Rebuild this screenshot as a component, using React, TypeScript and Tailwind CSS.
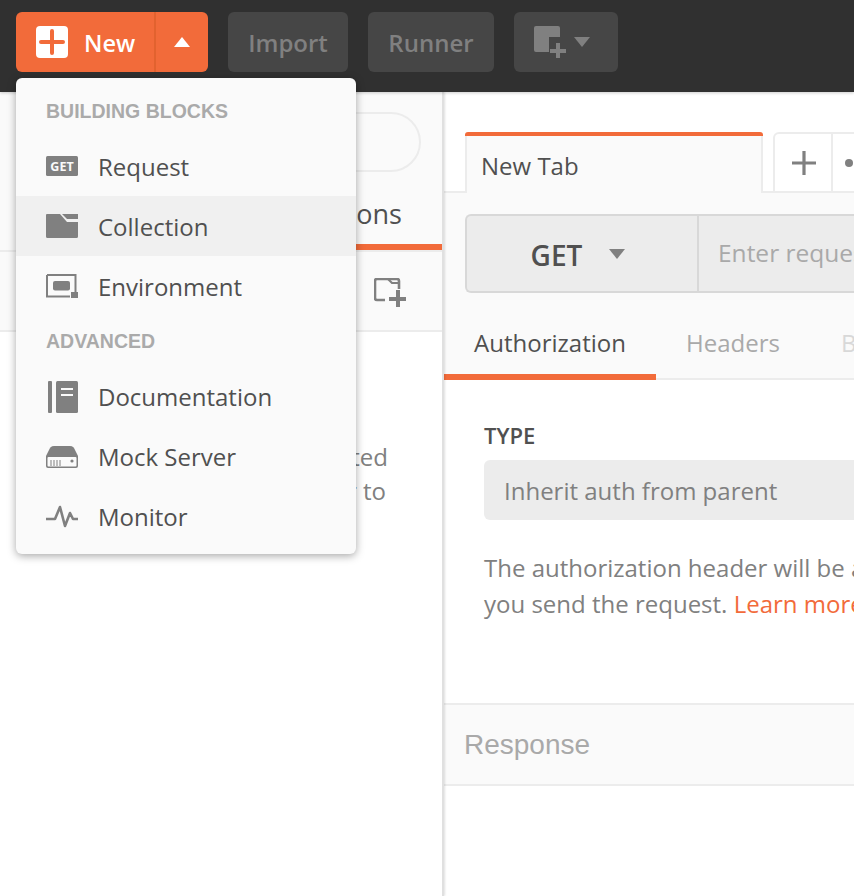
import React from "react";

const OS = "font-['Open_Sans',sans-serif]";
const LS = "font-['Liberation_Sans',sans-serif]";

function Caret({ up = false, color = "#fff" }: { up?: boolean; color?: string }) {
  return (
    <svg width="16" height="10" viewBox="0 0 16 10">
      <path d={up ? "M8 0L16 10H0Z" : "M0 0H16L8 10Z"} fill={color} />
    </svg>
  );
}

const icons: Record<string, React.ReactNode> = {
  get: (
    <svg width="32" height="20" viewBox="0 0 32 20">
      <rect width="32" height="20" rx="1.5" fill="#808080" />
      <text x="16" y="14.5" textAnchor="middle" fontSize="12.5" fontWeight="700" fill="#fafafa" fontFamily="Open Sans, sans-serif">GET</text>
    </svg>
  ),
  folder: (
    <svg width="32" height="24" viewBox="0 0 32 24">
      <path d="M1 0H14L21 8H32V22.5a1.5 1.5 0 0 1-1.5 1.5H1.5A1.5 1.5 0 0 1 0 22.5V1a1 1 0 0 1 1-1Z" fill="#808080" />
      <path d="M16 0H32V5H21Z" fill="#808080" />
    </svg>
  ),
  env: (
    <svg width="32" height="24" viewBox="0 0 32 24">
      <path d="M1 1H29.5V18M24 22.5H1V1" fill="none" stroke="#808080" strokeWidth="2" />
      <rect x="7" y="7" width="17" height="9.5" rx="2" fill="#808080" />
      <rect x="25" y="18" width="7" height="6" fill="#808080" />
    </svg>
  ),
  doc: (
    <svg width="32" height="32" viewBox="0 0 32 32">
      <rect x="2" y="0" width="4" height="32" rx="1" fill="#808080" />
      <rect x="10" y="0" width="22" height="32" rx="1.5" fill="#808080" />
      <rect x="15" y="7" width="12" height="2" fill="#fafafa" />
      <rect x="15" y="13" width="12" height="2" fill="#fafafa" />
    </svg>
  ),
  mock: (
    <svg width="32" height="22" viewBox="0 0 32 22">
      <path d="M8 0H24C27 0 28 2 29 4L32 10V20a2 2 0 0 1-2 2H2a2 2 0 0 1-2-2V10L3 4C4 2 5 0 8 0Z" fill="#808080" />
      <rect x="1.5" y="11" width="29" height="9.5" rx="1" fill="#fafafa" />
      <path d="M5 14V20M8 14V20M11 14V20M14 14V20" stroke="#808080" strokeWidth="1" />
      <circle cx="26" cy="15" r="1.6" fill="#808080" />
    </svg>
  ),
  monitor: (
    <svg width="32" height="24" viewBox="0 0 32 24">
      <path d="M0 14H9L14 2L19 21L24 8L27 14H32" fill="none" stroke="#808080" strokeWidth="2.6" strokeLinejoin="round" />
    </svg>
  ),
};

function MenuRow({ icon, label, active = false, nudge = false }: { icon: string; label: string; active?: boolean; nudge?: boolean }) {
  return (
    <div className={`flex h-[60px] items-center pl-[30px] ${active ? "bg-[#f0f0f0]" : ""}`}>
      <div className="flex w-[32px] justify-center">{icons[icon]}</div>
      <span className={`ml-[20px] text-[24px] text-[#505050] ${OS} ${nudge ? "pt-[2px]" : ""}`}>{label}</span>
    </div>
  );
}

function TopButton({ children, w }: { children: React.ReactNode; w: string }) {
  return (
    <div className={`flex h-[60px] items-center justify-center rounded-[6px] bg-[#464646] text-[24px] font-semibold text-[#808080] ${OS} ${w}`}>
      {children}
    </div>
  );
}

export default function App() {
  return (
    <div className={`relative flex h-[896px] w-[854px] flex-col overflow-hidden bg-white ${OS}`}>
      <header className="relative z-[15] flex h-[92px] shrink-0 items-start gap-[20px] bg-[#303030] pl-[16px] pt-[12px] shadow-[0_1px_3px_rgba(0,0,0,0.2)]">
        <div className="flex h-[60px] w-[192px] rounded-[6px] bg-[#f26b3a]">
          <div className="flex w-[140px] items-center border-r-2 border-[#e2622f] pl-[20px]">
            <svg width="32" height="32" viewBox="0 0 32 32">
              <rect width="32" height="32" rx="4" fill="#fff" />
              <path d="M16 5V27M5 16H27" stroke="#f26b3a" strokeWidth="4" strokeLinecap="round" />
            </svg>
            <span className="ml-[16px] pt-[3px] text-[23.5px] font-semibold text-white">New</span>
          </div>
          <div className="flex flex-1 items-center justify-center">
            <Caret up />
          </div>
        </div>
        <TopButton w="w-[120px]"><span className="pt-[2px]">Import</span></TopButton>
        <TopButton w="w-[126px]"><span className="pt-[2px]">Runner</span></TopButton>
        <TopButton w="w-[104px]">
          <span className="flex items-center pr-[8px]">
            <svg width="32" height="32" viewBox="0 0 32 32">
              <path d="M2 0H24a2 2 0 0 1 2 2V11H15V26H2a2 2 0 0 1-2-2V2a2 2 0 0 1 2-2Z" fill="#808080" />
              <path d="M24 17V32M16 25H32" stroke="#808080" strokeWidth="4" />
            </svg>
            <span className="ml-[8px]"><Caret color="#808080" /></span>
          </span>
        </TopButton>
      </header>

      <div className="flex min-h-0 flex-1">
        <aside className="relative z-10 flex w-[444px] shrink-0 flex-col border-r-2 border-[#e0e0e0] shadow-[1px_0_2px_rgba(0,0,0,0.12)]">
          <div className="bg-[#fafafa]">
            <div className="flex h-[94px] items-start pl-[20px] pr-[21px] pt-[20px]">
              <div className="h-[60px] w-full rounded-[30px] border-2 border-[#ececec]" />
            </div>
            <div className="flex h-[64px] text-[27px] text-[#505050]">
              <div className="flex w-1/2 items-center justify-center pb-[8px]">History</div>
              <div className="flex w-1/2 items-center justify-end border-b-[6px] border-[#f26b3a] pb-[2px] pr-[40px]">Collections</div>
            </div>
            <div className="flex h-[82px] items-center justify-end border-y-2 border-[#ececec] pr-[36px] pt-[4px]">
              <svg width="32" height="30" viewBox="0 0 32 30">
                <path d="M11 22H3a2 2 0 0 1-2-2V3a2 2 0 0 1 2-2H23a2 2 0 0 1 2 2V11" fill="none" stroke="#808080" strokeWidth="2.6" />
                <path d="M14 1L18 5H25" fill="none" stroke="#808080" strokeWidth="2.2" />
                <path d="M24 12V29M15 21H32" stroke="#808080" strokeWidth="4" />
              </svg>
            </div>
          </div>
          <div className="flex flex-col items-end gap-[4px] pr-[54px] pt-[110px] text-[24px] leading-[30px] text-[#808080]">
            <span>Collections you've created</span>
            <span className="pr-[2px]">will be listed here for to</span>
          </div>
        </aside>

        <main className="flex min-w-0 flex-1 flex-col">
          <div className="h-[40px] bg-white" />
          <div className="flex h-[61px] items-stretch border-b-2 border-[#ececec] pl-[21px]">
            <div className="-mb-[2px] flex w-[298px] shrink-0 flex-col">
              <div className="h-[4px] rounded-t-[3px] bg-[#f26b3a]" />
              <div className="flex flex-1 items-center border-x-2 border-[#ececec] bg-[#fafafa] pl-[14px] pt-[2px] text-[24px] text-[#505050]">
                New Tab
              </div>
            </div>
            <div className="ml-[10px] flex w-[60px] shrink-0 items-center justify-center rounded-tl-[6px] border-l-2 border-r-2 border-t-2 border-[#ececec] pl-[2px]">
              <svg width="24" height="24" viewBox="0 0 24 24"><path d="M12 0V24M0 12H24" stroke="#808080" strokeWidth="3.2" /></svg>
            </div>
            <div className="flex flex-1 items-center border-t-2 border-[#ececec] pl-[12px]">
              <span className="h-[8px] w-[8px] rounded-full bg-[#808080]" />
            </div>
          </div>
          <div className="bg-[#fafafa] pt-[21px]">
            <div className="ml-[21px] flex h-[79px] rounded-l-[6px] border-2 border-r-0 border-[#d8d8d8] bg-[#ececec]">
              <div className="flex w-[232px] shrink-0 items-center justify-center border-r-2 border-[#d8d8d8] pr-[8px]">
                <span className="pt-[2px] text-[28px] font-semibold text-[#505050]">GET</span>
                <span className="ml-[27px]"><Caret color="#808080" /></span>
              </div>
              <div className="flex items-center pl-[19px] text-[24.5px] whitespace-nowrap text-[#a9a9a9]">Enter request URL</div>
            </div>
            <div className="flex h-[87px] items-end border-b-2 border-[#ececec] text-[24px]">
              <div className="-mb-[2px] flex h-[76px] w-[212px] shrink-0 items-center justify-center border-b-[6px] border-[#f26b3a] pt-[8px] text-[#505050]">Authorization</div>
              <div className="-mb-[2px] flex h-[76px] w-[154px] shrink-0 items-center justify-center pb-[6px] pt-[8px] text-[#a9a9a9]">Headers</div>
              <div className="-mb-[2px] flex h-[76px] items-center pb-[6px] pl-[31px] pt-[8px] text-[#d8d8d8]">Body</div>
            </div>
          </div>
          <div className="h-[323px] overflow-hidden pl-[40px] pt-[42px]">
            <div className="text-[22px] leading-[26px] font-semibold text-[#505050]">TYPE</div>
            <div className="mt-[12px] flex h-[60px] items-center rounded-l-[6px] bg-[#ececec] pl-[20px] pt-[2px] text-[24px] text-[#808080]">
              Inherit auth from parent
            </div>
            <div className="mt-[30px] text-[24px] leading-[36px] whitespace-nowrap text-[#808080]">
              <div>The authorization header will be automatically generated when</div>
              <div>you send the request. <span className="text-[#f26b3a]">Learn more about authorization</span></div>
            </div>
          </div>
          <div className={`flex h-[83px] items-center border-y-2 border-[#ececec] bg-[#fafafa] pl-[20px] text-[28px] text-[#a9a9a9] ${LS}`}>
            Response
          </div>
        </main>
      </div>

      <div className="absolute left-[16px] top-[78px] z-20 h-[476px] w-[340px] rounded-[6px] bg-[#fafafa] shadow-[0_2px_8px_rgba(0,0,0,0.35)]">
        <div className={`flex h-[58px] items-center pl-[30px] pt-[10px] text-[19.5px] font-bold text-[#aaaaaa] ${LS}`}>BUILDING BLOCKS</div>
        <MenuRow icon="get" label="Request" nudge />
        <MenuRow icon="folder" label="Collection" active nudge />
        <MenuRow icon="env" label="Environment" nudge />
        <div className={`flex h-[51px] items-center pl-[30px] text-[19.5px] font-bold text-[#aaaaaa] ${LS}`}>ADVANCED</div>
        <MenuRow icon="doc" label="Documentation" />
        <MenuRow icon="mock" label="Mock Server" />
        <MenuRow icon="monitor" label="Monitor" />
      </div>
    </div>
  );
}
